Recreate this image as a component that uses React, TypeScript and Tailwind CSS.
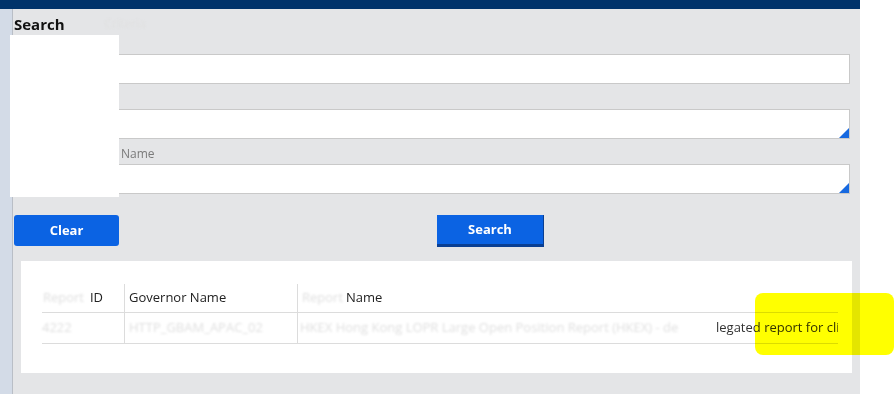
import React from "react"

const font = { fontFamily: '"Open Sans", "Noto Sans", sans-serif' }

function Corner() {
  return (
    <svg className="absolute right-0 bottom-0" width="10" height="10" viewBox="0 0 10 10">
      <polygon points="10,0 10,10 0,10" fill="#1769e0" />
    </svg>
  )
}

function Field({ label, textarea }: { label: React.ReactNode; textarea?: boolean }) {
  return (
    <div className="flex flex-col">
      <div className="h-[20px] flex items-center text-[12px] text-[#7a7a7a]">{label}</div>
      <div className="relative h-[30px] bg-white border border-[#c9c9c9]">{textarea && <Corner />}</div>
    </div>
  )
}

const faint = "text-[#e0e0e0] blur-[0.8px]"

export default function App() {
  return (
    <div className="relative w-[894px] h-[394px] overflow-hidden bg-white" style={font}>
      <div className="w-[860px] h-full flex flex-col">
        <div className="h-[9px] bg-[#00336a]" />
        <div className="flex flex-1">
          <div className="w-[13px] bg-[#d3dbe7] border-r border-[#b9bec6]" />
          <div className="flex-1 bg-[#e4e5e7] flex flex-col">
            <div className="ml-[1px] mr-[10px] flex flex-col">
              <div className="h-[25px] pt-[5px] flex items-end">
                <span className="text-[15px] font-bold text-[#111] leading-[20px]">Search</span>
                <span className={`ml-[40px] text-[12px] leading-[20px] ${faint}`}>Criteria</span>
              </div>
              <div className="flex flex-col gap-[5px]">
                <Field label="Report ID" />
                <Field label="Governor Name" textarea />
                <Field
                  label={
                    <>
                      <span className="inline-block w-[107px]" />
                      Name
                    </>
                  }
                  textarea
                />
              </div>
            </div>

            <div className="ml-[1px] mt-[21px] flex items-start">
              <button className="w-[105px] h-[31px] rounded-[3px] bg-[#0b63e3] text-white text-[13px] font-bold">
                Clear
              </button>
              <button className="ml-[318px] w-[107px] h-[32px] bg-[#0b63e3] border-b-[3px] border-r border-[#0a3f93] text-white text-[13px] font-bold">
                Search
              </button>
            </div>

            <div className="mx-[8px] mt-[14px] h-[112px] bg-white pt-[23px] pl-[21px] pr-[14px]">
              <div className="grid grid-cols-[82px_173px_1fr] text-[13px] text-[#222]">
                <div className="h-[29px] flex items-center justify-end pr-[21px] gap-[6px] border-b border-[#dcdcdc]">
                  <span className={faint}>Report</span>
                  <span>ID</span>
                </div>
                <div className="h-[29px] flex items-center pl-[4px] border-l border-b border-[#dcdcdc]">Governor Name</div>
                <div className="h-[29px] flex items-center pl-[4px] border-l border-b border-[#dcdcdc]">
                  <span className={`inline-block w-[44px] ${faint}`}>Report</span>
                  <span>Name</span>
                </div>

                <div className="h-[31px] flex items-center border-b border-[#dcdcdc]">
                  <span className={faint}>4222</span>
                </div>
                <div className="h-[31px] flex items-center pl-[4px] border-l border-b border-[#dcdcdc]">
                  <span className={faint}>HTTP_GBAM_APAC_02</span>
                </div>
                <div className="h-[31px] flex items-center pl-[2px] border-l border-b border-[#dcdcdc] overflow-hidden whitespace-nowrap">
                  <span className={`shrink-0 inline-block w-[416px] overflow-hidden ${faint}`}>
                    HKEX Hong Kong LOPR Large Open Position Report (HKEX) - de
                  </span>
                  <span className="shrink-0 text-[#333]">legated report for client</span>
                </div>
              </div>
            </div>
          </div>
        </div>
      </div>

      {/* redaction */}
      <div className="absolute left-[10px] top-[35px] w-[109px] h-[162px] bg-white" />
      {/* highlighter */}
      <div className="absolute left-[755px] top-[293px] w-[139px] h-[62px] rounded-[8px] bg-[#ffff00] mix-blend-multiply" />
    </div>
  )
}
